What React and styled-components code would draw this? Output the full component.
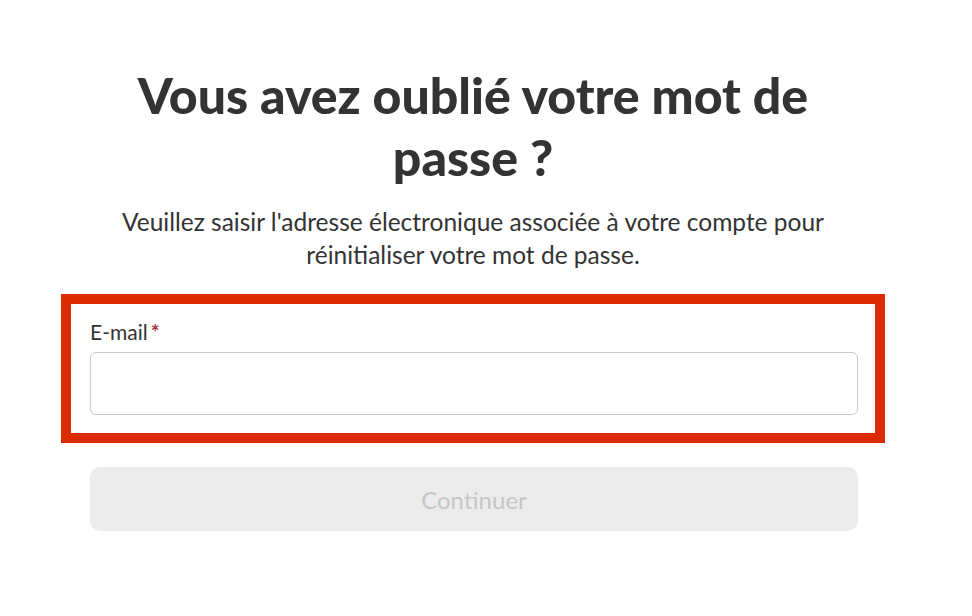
import styled, { createGlobalStyle } from 'styled-components';

const Global = createGlobalStyle`
  body {
    margin: 0;
    background: #fff;
    font-family: Lato, 'Noto Sans', sans-serif;
    color: #333;
  }
`;

const Page = styled.main`
  display: flex;
  padding: 64px 0 0 61px;
`;

const Column = styled.section`
  width: 824px;
  display: flex;
  flex-direction: column;
  align-items: center;
`;

const Title = styled.h1`
  margin: 0;
  max-width: 700px;
  font-size: 50px;
  line-height: 62px;
  font-weight: 900;
  text-align: center;
  color: #333;
`;

const Lead = styled.p`
  margin: 17px 0 0;
  max-width: 720px;
  font-size: 24.5px;
  line-height: 33px;
  text-align: center;
  color: #333;
`;

const Highlight = styled.div`
  align-self: stretch;
  margin-top: 23px;
  border: 10px solid #dc2b02;
  padding: 15px 17px 18px 19px;
  display: flex;
  flex-direction: column;
`;

const Label = styled.label`
  font-size: 21px;
  line-height: 26px;
  color: #333;
`;

const Required = styled.span`
  margin-left: 3px;
  color: #a8323c;
  font-size: 21px;
  font-weight: 700;
  line-height: 1;
`;

const Input = styled.input`
  margin-top: 7px;
  height: 63px;
  box-sizing: border-box;
  border: 1px solid #c9c9c9;
  border-radius: 6px;
  background: #fff;
  font: inherit;
  padding: 0 16px;
  outline: none;
`;

const Button = styled.button`
  margin-top: 24px;
  width: 768px;
  height: 64px;
  margin-left: 2px;
  border: none;
  border-radius: 10px;
  background: #ececec;
  color: #c6c6c6;
  font-family: Lato, 'Noto Sans', sans-serif;
  font-size: 24px;
`;

export default function App() {
  return (
    <>
      <Global />
      <Page>
        <Column>
          <Title>Vous avez oublié votre mot de passe ?</Title>
          <Lead>
            Veuillez saisir l'adresse électronique associée à votre compte pour réinitialiser votre mot de passe.
          </Lead>
          <Highlight>
            <Label htmlFor="email">
              E-mail<Required>*</Required>
            </Label>
            <Input id="email" type="email" />
          </Highlight>
          <Button disabled>Continuer</Button>
        </Column>
      </Page>
    </>
  );
}
